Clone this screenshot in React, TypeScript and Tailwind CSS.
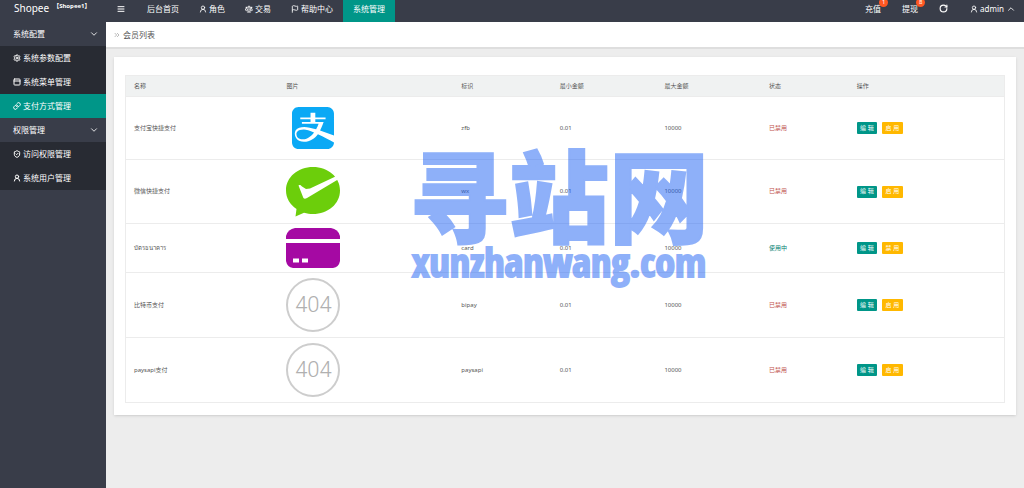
import React from "react";
import {
  ChevronDown,
  ChevronUp,
  ChevronsRight,
  Flag,
  Link as LinkIcon,
  PanelTop,
  RotateCw,
  Scale,
  Settings,
  ShieldCheck,
  TextAlignJustify,
  UserRound,
} from "lucide-react";
import { FaAlipay } from "react-icons/fa";

interface Payment {
  name: string;
  image: React.ReactNode;
  code: string;
  active: boolean;
}

const WechatPay = () => (
  <svg viewBox="0 0 54 50" className="h-[50px] w-[54px]" aria-hidden="true">
    <path
      d="M27 0C12 0 0 10 0 23.500C0 31 4 37.500 10.500 42L9.500 49.500L18 45.800C21 46.700 24 47 27 47C42 47 54 37 54 23.500C54 10 42 0 27 0Z"
      fill="#6cce0b"
    />
    <path
      d="M12.500 18.500C14 17.500 15 18.500 16 19.500L20 22L24 21.500L49.500 9.500L52 12.500L21 31C18.500 32.500 17.500 31.500 17 30Z"
      fill="#fff"
    />
  </svg>
);

const BankCard = () => (
  <svg viewBox="0 0 54 40" className="h-10 w-[54px]" aria-hidden="true">
    <path d="M0 11V8Q2 1 9 0H45Q52 1 54 8V11Z" fill="#a509a3" />
    <path d="M0 15H54V33Q53 39 47 40H7Q1 39 0 33Z" fill="#a509a3" />
    <path d="M7 30.500H13V34.500H7ZM16 30.500H22V34.500H16Z" fill="#fff" />
  </svg>
);

const NotFoundImage = () => (
  <div className="my-px flex size-[54px] items-center justify-center rounded-full border-2 border-[#cdcdcd] font-['Roboto',sans-serif] text-[22px] leading-none font-light text-[#b0b0b0]">
    404
  </div>
);

const payments: Payment[] = [
  {
    name: "支付宝快捷支付",
    image: (
      <div className="flex size-[54px] items-center justify-center">
        <FaAlipay className="size-[48px] text-[#0ba9f5]" />
      </div>
    ),
    code: "zfb",
    active: false,
  },
  {
    name: "微信快捷支付",
    image: (
      <div className="flex h-[55px] items-center">
        <WechatPay />
      </div>
    ),
    code: "wx",
    active: false,
  },
  { name: "บัตรธนาคาร", image: <BankCard />, code: "card", active: true },
  { name: "比特币支付", image: <NotFoundImage />, code: "bipay", active: false },
  { name: "paysapi支付", image: <NotFoundImage />, code: "paysapi", active: false },
];

const menu = [
  {
    title: "系统配置",
    items: [
      { label: "系统参数配置", icon: Settings, active: false },
      { label: "系统菜单管理", icon: PanelTop, active: false },
      { label: "支付方式管理", icon: LinkIcon, active: true },
    ],
  },
  {
    title: "权限管理",
    items: [
      { label: "访问权限管理", icon: ShieldCheck, active: false },
      { label: "系统用户管理", icon: UserRound, active: false },
    ],
  },
];

const topNav = [
  { label: "后台首页", icon: null, active: false },
  { label: "角色", icon: UserRound, active: false },
  { label: "交易", icon: Scale, active: false },
  { label: "帮助中心", icon: Flag, active: false },
  { label: "系统管理", icon: null, active: true },
];

const Header = () => (
  <header className="flex h-[22px] overflow-hidden bg-[#393d49] text-[8px] leading-[17px] text-white">
    <div className="flex w-[106px] shrink-0 gap-1 pl-3.5">
      <span className="text-[10px]">Shopee</span>
      <sup className="top-0 text-[6px] leading-3 font-bold">【Shopee1】</sup>
    </div>
    <button aria-label="收起菜单" className="mr-3 ml-[11px] flex h-[17px] items-center">
      <TextAlignJustify className="size-2" strokeWidth={3} />
    </button>
    <nav className="flex">
      {topNav.map(({ label, icon: Icon, active }) => (
        <a
          key={label}
          href="#"
          className={`flex gap-0.5 px-2.5 ${active ? "bg-[#009688]" : ""}`}
        >
          {Icon && <Icon className="mt-[5px] size-2" strokeWidth={2.5} />}
          {label}
        </a>
      ))}
    </nav>
    <div className="ml-auto flex pr-2">
      <a href="#" className="relative mr-[21px]">
        充值
        <span className="absolute -top-0.5 left-3.5 size-[9px] rounded-full bg-[#ff5722] text-center text-[6px] leading-[9px]">
          1
        </span>
      </a>
      <a href="#" className="relative mr-[21px]">
        提现
        <span className="absolute -top-0.5 left-3.5 size-[9px] rounded-full bg-[#ff5722] text-center text-[6px] leading-[9px]">
          8
        </span>
      </a>
      <button aria-label="刷新" className="mr-[22px] flex h-[17px] items-center">
        <RotateCw className="size-[9px]" strokeWidth={3} />
      </button>
      <button className="flex h-[17px] items-center gap-0.5">
        <UserRound className="size-2" strokeWidth={2.5} />
        admin
        <ChevronUp className="size-2.5" />
      </button>
    </div>
  </header>
);

const Sidebar = () => (
  <aside className="w-[106px] shrink-0 bg-[#393d49] text-[8px] text-white">
    {menu.map((group) => (
      <div key={group.title}>
        <button className="flex h-6 w-full items-center justify-between pr-[7px] pl-[13px]">
          {group.title}
          <ChevronDown className="size-2.5" />
        </button>
        <ul className="bg-[#282b33]">
          {group.items.map(({ label, icon: Icon, active }) => (
            <li key={label}>
              <a
                href="#"
                className={`flex h-6 items-center gap-0.5 pl-[13px] ${active ? "bg-[#009688]" : ""}`}
              >
                <Icon className="size-2" strokeWidth={3} />
                {label}
              </a>
            </li>
          ))}
        </ul>
      </div>
    ))}
  </aside>
);

const App = () => {
  return (
    <div className="flex min-h-screen flex-col bg-[#ededed] font-['Noto_Sans','Noto_Sans_CJK_SC',sans-serif]">
      <Header />
      <div className="flex flex-1">
        <Sidebar />
        <main className="min-w-0 flex-1">
          {/* Breadcrumb */}
          <div className="flex h-[27px] items-center gap-0.5 border-b-2 border-[#dedede] bg-white pl-[7px] text-[8px] text-[#555]">
            <ChevronsRight className="size-2 text-[#999]" />
            会员列表
          </div>

          {/* Payment methods */}
          <div className="mx-2 mt-2 bg-white px-[11px] pt-[18px] pb-3 shadow">
            <div className="relative">
              <table className="w-full table-fixed border border-[#ececec] text-left text-[6px] text-[#555]">
                <thead>
                  <tr className="h-[21px] border-b border-[#ececec] bg-[#f0f2f2]">
                    <th className="w-[17.4%] px-2 font-normal">名称</th>
                    <th className="w-[19.9%] px-2 font-normal">图片</th>
                    <th className="w-[11.2%] px-2 font-normal">标识</th>
                    <th className="w-[11.9%] px-2 font-normal">最小金额</th>
                    <th className="w-[11.9%] px-2 font-normal">最大金额</th>
                    <th className="w-[10%] px-2 font-normal">状态</th>
                    <th className="px-2 font-normal">操作</th>
                  </tr>
                </thead>
                <tbody>
                  {payments.map((item) => (
                    <tr key={item.code} className="border-b border-[#ececec]">
                      <td className="px-2">{item.name}</td>
                      <td className="px-2 py-1">{item.image}</td>
                      <td className="px-2">{item.code}</td>
                      <td className="px-2">0.01</td>
                      <td className="px-2">10000</td>
                      <td className={`px-2 ${item.active ? "text-[#00806f]" : "text-[#c0504d]"}`}>
                        {item.active ? "使用中" : "已禁用"}
                      </td>
                      <td className="px-2">
                        <div className="flex gap-[5px] text-white">
                          <button className="h-3 w-5 rounded-[1px] bg-[#009688]">编 辑</button>
                          <button className="h-3 w-[21px] rounded-[1px] bg-[#ffb800]">
                            {item.active ? "禁 用" : "启 用"}
                          </button>
                        </div>
                      </td>
                    </tr>
                  ))}
                </tbody>
              </table>

              {/* Watermark */}
              <div className="pointer-events-none absolute inset-x-0 top-[67px] flex flex-col items-center pr-3 text-[#1f63f5] opacity-50 [-webkit-text-stroke:2px_#1f63f5]">
                <span className="font-['Noto_Sans_CJK_SC',sans-serif] text-[100px] leading-[100px] font-black whitespace-nowrap">
                  寻站网
                </span>
                <span className="font-['Liberation_Sans_Narrow','Open_Sans_Condensed','Roboto_Condensed','DejaVu_Sans_Condensed',sans-serif] text-[40px] leading-10 font-bold">
                  xunzhanwang.com
                </span>
              </div>
            </div>
          </div>
        </main>
      </div>
    </div>
  );
};

export default App;
